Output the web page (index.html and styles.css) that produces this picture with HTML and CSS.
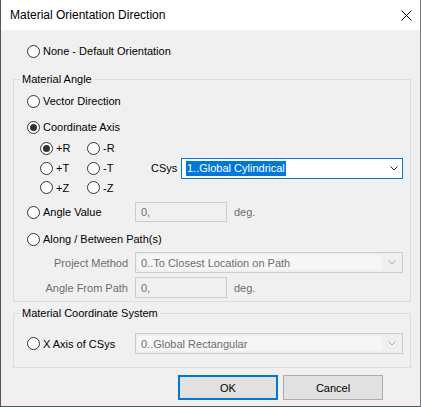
FILE: index.html
```html
<!DOCTYPE html>
<html>
<head>
<meta charset="utf-8">
<link rel="stylesheet" href="styles.css">
</head>
<body>
<div class="window">
  <div class="titlebar">
    <span class="title">Material Orientation Direction</span>
    <svg class="close" width="11" height="11" viewBox="0 0 11 11"><path d="M0.5 0.5 L10.5 10.5 M10.5 0.5 L0.5 10.5" stroke="#000" stroke-width="1" fill="none"/></svg>
  </div>
  <div class="content">
    <div class="row row-none"><span class="opt"><span class="rb"></span><span>None - Default Orientation</span></span></div>

    <fieldset class="group g1">
      <legend>Material Angle</legend>
      <div class="g-inner">
        <div class="row r-vector"><span class="opt"><span class="rb"></span><span>Vector Direction</span></span></div>
        <div class="row r-coord"><span class="opt"><span class="rb on"></span><span>Coordinate Axis</span></span></div>
        <div class="axes">
          <span class="opt c1"><span class="rb on"></span><span>+R</span></span>
          <span class="opt c2"><span class="rb"></span><span>-R</span></span>
          <span class="opt c1"><span class="rb"></span><span>+T</span></span>
          <span class="opt c2"><span class="rb"></span><span>-T</span></span>
          <span class="csys-label">CSys</span>
          <div class="combo active">
            <span class="sel">1..Global Cylindrical</span>
            <svg class="chev" width="8" height="5" viewBox="0 0 8 5"><path d="M0.5 0.5 L4 4 L7.5 0.5" stroke="#333" fill="none"/></svg>
          </div>
          <span class="opt c1"><span class="rb"></span><span>+Z</span></span>
          <span class="opt c2"><span class="rb"></span><span>-Z</span></span>
        </div>
        <div class="row r-angle">
          <span class="opt wide"><span class="rb"></span><span>Angle Value</span></span>
          <div class="tbox">0,</div>
          <span class="unit">deg.</span>
        </div>
        <div class="row r-along"><span class="opt"><span class="rb"></span><span>Along / Between Path(s)</span></span></div>
        <div class="row r-proj">
          <span class="flabel">Project Method</span>
          <div class="combo disabled">
            <span class="field">0..To Closest Location on Path</span>
            <span class="arrow"><svg width="8" height="5" viewBox="0 0 8 5"><path d="M0.5 0.5 L4 4 L7.5 0.5" stroke="#a6a6a6" fill="none"/></svg></span>
          </div>
        </div>
        <div class="row r-from">
          <span class="flabel">Angle From Path</span>
          <div class="tbox">0,</div>
          <span class="unit">deg.</span>
        </div>
      </div>
    </fieldset>

    <fieldset class="group g2">
      <legend>Material Coordinate System</legend>
      <div class="g-inner">
        <div class="row r-xaxis">
          <span class="opt wide"><span class="rb"></span><span>X Axis of CSys</span></span>
          <div class="combo disabled">
            <span class="field">0..Global Rectangular</span>
            <span class="arrow"><svg width="8" height="5" viewBox="0 0 8 5"><path d="M0.5 0.5 L4 4 L7.5 0.5" stroke="#a6a6a6" fill="none"/></svg></span>
          </div>
        </div>
      </div>
    </fieldset>

    <div class="buttons">
      <button class="btn default">OK</button>
      <button class="btn">Cancel</button>
    </div>
  </div>
</div>
</body>
</html>
```

FILE: styles.css
```css
* { box-sizing: border-box; }
html, body { margin: 0; padding: 0; }
body {
  font-family: "Liberation Sans", Arial, sans-serif;
  font-size: 11px;
  color: #000;
  background: #f0f0f0;
}
.window {
  width: 421px;
  height: 407px;
  border-left: 1px solid #50555c;
  border-right: 1px solid #7a7a7a;
  border-bottom: 1px solid #50555c;
  background: #f0f0f0;
  display: flex;
  flex-direction: column;
  overflow: hidden;
}
.titlebar {
  height: 30px;
  flex: none;
  background: #fff;
  display: flex;
  align-items: center;
  justify-content: space-between;
  padding: 0 8px 0 9px;
}
.title { font-size: 12px; }
.close { display: block; }
.content { flex: 1; }

.row { display: flex; align-items: center; height: 20px; }
.opt { display: flex; align-items: center; gap: 3px; }
.rb {
  width: 13px; height: 13px; flex: none;
  border: 1px solid #333;
  border-radius: 50%;
  background: #fff;
  display: flex; align-items: center; justify-content: center;
}
.rb.on::after {
  content: "";
  width: 7px; height: 7px;
  border-radius: 50%;
  background: #333;
}

.row-none { margin-top: 11px; padding-left: 26px; }

.group {
  margin: 0 0 0 12px;
  padding: 0;
  width: 398px;
  border: 1px solid #dcdcdc;
  min-width: 0;
}
.group legend {
  margin-left: 6px;
  padding: 0 2px;
  line-height: 17px;
  height: 17px;
  font-size: 11px;
}
.g1 { margin-top: 10px; }
.g1 .g-inner { padding: 0 0 3px 13px; }
.g2 { margin-top: 3px; }
.g2 .g-inner { padding: 0 0 13px 13px; }

.r-vector { margin-top: 3px; }
.r-coord { margin-top: 6px; }

.axes {
  margin-top: 1px;
  display: grid;
  grid-template-columns: 47px 64px 30px 222px;
  grid-template-rows: 20px 20px 19px;
  align-items: center;
  padding-left: 13px;
}
.c1 { grid-column: 1; }
.c2 { grid-column: 2; }
.csys-label { grid-column: 3; grid-row: 2; }
.combo.active { grid-column: 4; grid-row: 2; }

.combo {
  height: 21px;
  display: flex;
  align-items: center;
}
.combo.active {
  border: 1px solid #0078d7;
  background: #fff;
  padding: 0 4px 0 4px;
  justify-content: space-between;
  margin-top: 1px;
}
.sel {
  background: #0078d7;
  color: #fff;
  line-height: 15px;
  height: 15px;
  padding: 0 1px;
}
.chev { display: block; }

.combo.disabled {
  width: 268px;
  border: 1px solid #cccccc;
  background: #efefef;
  padding: 2px 0 2px 2px;
  color: #6d6d6d;
  align-items: stretch;
}
.combo.disabled .field {
  flex: 1;
  background: #f6f6f6;
  padding-left: 3px;
  display: flex;
  align-items: center;
}
.combo.disabled .arrow {
  width: 20px;
  flex: none;
  display: flex;
  align-items: center;
  justify-content: center;
}
.combo.disabled .arrow svg { display: block; }

.wide { width: 108px; }
.tbox {
  width: 92px;
  height: 20px;
  border: 1px solid #cccccc;
  background: #f0f0f0;
  color: #6d6d6d;
  padding-left: 5px;
  display: flex;
  align-items: center;
}
.unit { color: #6d6d6d; margin-left: 7px; }
.flabel {
  width: 108px;
  padding-right: 7px;
  text-align: right;
  color: #6d6d6d;
}

.r-angle { margin-top: 5px; }
.r-along { margin-top: 7px; }
.r-proj { margin-top: 3px; height: 21px; }
.r-from { margin-top: 4px; height: 21px; }
.r-from .tbox { height: 21px; }
.r-xaxis { margin-top: 11px; height: 21px; }

.buttons {
  margin: 7px 0 0 177px;
  display: flex;
  gap: 5px;
}
.btn {
  width: 100px;
  height: 25px;
  font-family: inherit;
  font-size: 11px;
  color: #000;
  background: #e1e1e1;
  border: 1px solid #adadad;
  border-radius: 0;
  padding: 0;
}
.btn.default { border: 2px solid #0078d7; }
```
